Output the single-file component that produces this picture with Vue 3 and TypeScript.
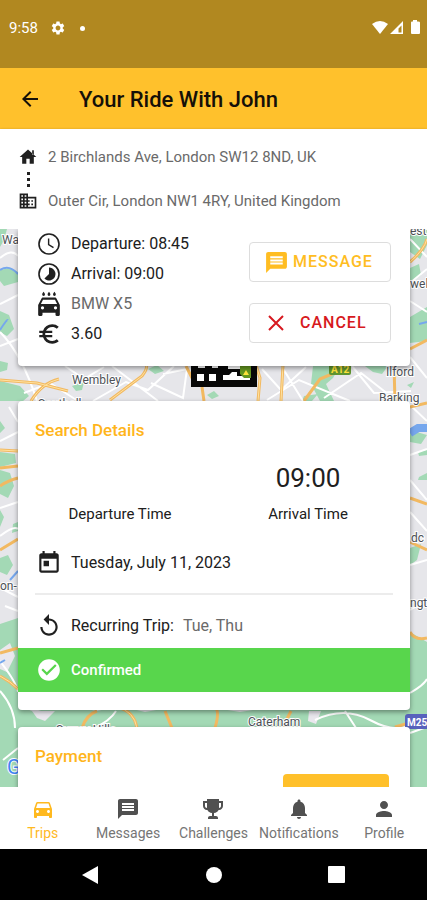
<script setup lang="ts">
interface Tab {
  label: string
  icon: string
}

const message = 'M20 2H4c-1.1 0-1.99.9-1.99 2L2 22l4-4h14c1.1 0 2-.9 2-2V4c0-1.1-.9-2-2-2zm-2 12H6v-2h12v2zm0-3H6V9h12v2zm0-3H6V6h12v2z'

const tabs: Tab[] = [
  {
    label: 'Trips',
    icon: 'M18.92 6.01C18.72 5.42 18.16 5 17.5 5h-11c-.66 0-1.21.42-1.42 1.01L3 12v8c0 .55.45 1 1 1h1c.55 0 1-.45 1-1v-1h12v1c0 .55.45 1 1 1h1c.55 0 1-.45 1-1v-8l-2.08-5.99zM6.5 16c-.83 0-1.5-.67-1.5-1.5S5.67 13 6.5 13s1.5.67 1.5 1.5S7.33 16 6.5 16zm11 0c-.83 0-1.5-.67-1.5-1.5s.67-1.5 1.5-1.5 1.5.67 1.5 1.5-.67 1.5-1.5 1.5zM5 11l1.5-4.5h11L19 11H5z',
  },
  { label: 'Messages', icon: message },
  {
    label: 'Challenges',
    icon: 'M18 2H6v2H2v5c0 2.2 1.8 4 4 4h.4c.8 1.7 2.5 2.9 4.6 3v3H9c-1.1 0-2 .9-2 2v1h10v-1c0-1.1-.9-2-2-2h-2v-3c2.100-.1 3.800-1.300 4.600-3h.4c2.200 0 4-1.800 4-4V4h-4V2zM4 6h2v5c-1.100 0-2-.9-2-2V6zm16 3c0 1.100-.9 2-2 2V6h2v3z',
  },
  {
    label: 'Notifications',
    icon: 'M12 22c1.1 0 2-.9 2-2h-4c0 1.1.89 2 2 2zm6-6v-5c0-3.07-1.64-5.64-4.5-6.32V4c0-.83-.67-1.500-1.500-1.500s-1.500.67-1.500 1.500v.68C7.630 5.360 6 7.920 6 11v5l-2 2v1h16v-1l-2-2z',
  },
  {
    label: 'Profile',
    icon: 'M12 12c2.210 0 4-1.790 4-4s-1.790-4-4-4-4 1.790-4 4 1.790 4 4 4zm0 2c-2.670 0-8 1.340-8 4v2h16v-2c0-2.660-5.330-4-8-4z',
  },
]
</script>

<template>
  <div class="screen">
    <div class="status">
      <span>9:58</span>
      <svg class="gear" viewBox="0 0 24 24"><path d="M19.140 12.940c.04-.3.06-.61.06-.94 0-.32-.02-.64-.07-.94l2.030-1.580c.18-.14.23-.41.12-.61l-1.920-3.320c-.12-.22-.37-.29-.59-.22l-2.390.96c-.5-.38-1.030-.7-1.620-.94l-.36-2.540c-.04-.24-.24-.41-.48-.41h-3.840c-.24 0-.43.17-.47.41l-.36 2.540c-.59.24-1.130.57-1.620.94l-2.390-.96c-.22-.08-.47 0-.59.22L2.740 8.870c-.12.21-.08.47.12.61l2.030 1.580c-.05.3-.09.63-.09.94s.02.64.07.94l-2.030 1.580c-.18.14-.23.41-.12.61l1.920 3.320c.12.22.37.29.59.22l2.390-.96c.5.38 1.030.7 1.620.94l.36 2.540c.05.24.24.41.48.41h3.840c.24 0 .44-.17.47-.41l.36-2.540c.59-.24 1.130-.56 1.620-.94l2.390.96c.22.08.47 0 .59-.22l1.920-3.320c.12-.22.07-.47-.12-.61l-2.010-1.580zM12 15.600c-1.980 0-3.600-1.620-3.600-3.600s1.620-3.600 3.600-3.600 3.600 1.620 3.600 3.600-1.620 3.600-3.600 3.600z" /></svg>
      <i class="dot"></i>
      <svg class="signals" viewBox="0 0 50 16">
        <path d="M0 4Q8-2 16 4L8 14Z" />
        <path d="M31 1V14H18ZM29.500 5.500 26.500 8.500V12.500H29.500Z" fill-rule="evenodd" />
        <path d="M39 2.500Q39 1.500 40 1.500H41V0H45V1.500H46Q48 1.500 48 2.500V13Q48 14 47 14H40Q39 14 39 13Z" />
      </svg>
    </div>

    <header class="bar">
      <button class="back" type="button" aria-label="Back">
        <svg viewBox="0 0 24 24"><path d="M20 11H7.830l5.590-5.590L12 4l-8 8 8 8 1.410-1.410L7.830 13H20v-2z" /></svg>
      </button>
      <h1>Your Ride With John</h1>
    </header>

    <section class="route">
      <div class="stop">
        <svg viewBox="0 0 24 24"><path d="M10 20v-6h4v6h5v-8h3L12 3 2 12h3v8zM17 4h2v5h-2z" /></svg>
        <span>2 Birchlands Ave, London SW12 8ND, UK</span>
      </div>
      <div class="link"><i></i><i></i><i></i></div>
      <div class="stop">
        <svg viewBox="0 0 24 24"><path d="M12 7V3H2v18h20V7H12zM6 19H4v-2h2v2zm0-4H4v-2h2v2zm0-4H4V9h2v2zm0-4H4V5h2v2zm4 12H8v-2h2v2zm0-4H8v-2h2v2zm0-4H8V9h2v2zm0-4H8V5h2v2zm10 12h-8v-2h2v-2h-2v-2h2v-2h-2V9h8v10zm-2-8h-2v2h2v-2zm0 4h-2v2h2v-2z" /></svg>
        <span>Outer Cir, London NW1 4RY, United Kingdom</span>
      </div>
    </section>

    <main class="content">
      <svg class="map" viewBox="0 229 427 558" preserveAspectRatio="xMidYMid slice" aria-hidden="true">
        <rect y="229" width="427" height="558" fill="#e6e6ea" />
        <g fill="#a3d9b5">
          <path d="M0 229H7L4 240 0 247ZM0 270 10 268 18 272V282L4 286 0 281ZM0 311 9 315 14 329 7 336 0 332ZM0 361 8 363 7 370 0 372ZM0 381 20 386 29 396 23 401H0ZM0 421 5 428 0 433ZM0 452 15 454 16 463 0 467ZM0 470 10 473 14 486 8 498 0 494ZM0 510 4 517 0 527ZM13 524 18 522V531L12 533ZM0 558 8 555 13 565 7 575 0 572ZM0 624 18 618V728H0Z" />
          <path d="M0 700 35 712 60 704 97 711 120 706 145 712 190 704 240 712 290 704 427 709V787H0Z" />
          <path d="M148 369 157 365 164 371 155 374ZM72 386 84 382 82 390 76 391ZM313 366H340L333 378 326 384 334 401H320L311 384ZM365 366 388 366 382 374 373 372ZM304 396 318 394 312 401H302ZM207 395 214 391 219 396 212 399ZM407 385 414 382 411 388Z" />
          <path d="M410 231 417 229 427 229V245L420 259 410 252ZM410 268 419 264 421 275 410 284ZM410 317 427 307V341L410 343ZM410 430 427 435 421 444 410 442ZM418 452 427 450V455L419 456ZM419 477 427 473V480H418ZM410 548 421 544 417 560 410 565ZM410 632 427 642V787H410Z" />
        </g>
        <g fill="#e9e7ed"><path d="M32 711 55 711 45 721 37 718ZM309 711H321L316 724 308 721ZM0 650 10 643 15 656 7 672 0 669Z" /></g>
        <g fill="none" stroke="#fff" stroke-width="2">
          <path d="M0 258Q12 248 18 256M0 304 18 295M0 332Q22 354 37 401M0 346 18 339M0 441 18 432M9 407 18 422M0 508 18 502M0 536Q14 525 18 529M0 588 18 597M5 606 18 611M0 661Q17 683 18 692M0 691Q15 708 15 728M3 760 18 748" />
          <path d="M65 366 84 379 104 367M24 393 50 383 78 401M93 401 126 382 148 390 174 366M112 366 158 401M163 374 187 369 183 398 151 383M262 369 281 390 306 367M267 400 299 380 350 401M282 367 303 401M324 398 361 373 393 398M352 366 374 393 411 391" />
          <path d="M410 239 427 257M410 283 427 269M410 301 427 312M410 357 427 378M410 405 427 421M410 455 427 449M410 480 427 500M410 512 427 531M410 565 427 560M410 610 427 600M410 693Q424 685 427 679M410 733 427 727M315 720Q344 706 370 720T410 724M345 711 356 728M116 711Q110 721 94 728" />
        </g>
        <g fill="none" stroke="#f2b961" stroke-width="3">
          <path d="M0 380 37 383 68 391M31 401Q42 383 59 379M110 400 142 376Q150 366 144 362M0 450 18 451M0 468 18 466M0 486Q9 480 18 478M0 550 18 539M0 653 18 648M0 676Q10 681 18 689M82 728Q86 715 97 711M117 707Q134 711 137 728M165 711 172 728M215 728Q220 711 215 707M283 727 291 711" />
          <path d="M186 366 192 378M202 387 204 401M256 365 260 378 258 401M283 365 281 401M304 401 320 379 332 374 340 366M394 366 395 401M410 262Q424 250 427 239M410 349 427 340M410 407 427 403M410 498 427 504M410 542 427 550M410 632Q415 641 427 638M395 727 409 723" />
        </g>
        <g fill="none" stroke="#ffe2a0">
          <path d="M0 380 37 383 68 391M31 401Q42 383 59 379M110 400 142 376Q150 366 144 362M0 450 18 451M0 676Q10 681 18 689M256 365 260 378 258 401M283 365 281 401M410 262Q424 250 427 239M117 707Q134 711 137 728" />
        </g>
        <g fill="none" stroke="#76a7ed" stroke-width="3">
          <path d="M0 270Q9 264 18 274M0 330Q7 319 8 320M10 580 18 571M0 663 5 660M419 324 427 322" stroke-width="2" />
          <path d="M410 433 418 428H427" stroke-width="8" />
        </g>
        <rect x="191" y="360" width="66" height="27" fill="#080808" />
        <path d="M197 374H204V381H197ZM209 374H216V381H209ZM223 375H229L232 372H237V376H250V380H223ZM198 366H205V368H198ZM212 366H218V368H212ZM228 366H240V369H228Z" fill="#fff" />
        <path d="M240 366H251V378H244L240 374Z" fill="#649620" />
        <path d="M246 370 249 375H243Z" fill="#ffe33b" />
        <rect x="329" y="360" width="22" height="15" rx="2" fill="#5f9430" />
        <rect x="405" y="714" width="34" height="15" rx="3" fill="#5862bd" />
        <g class="places">
          <text x="2" y="244">Wa</text>
          <text x="72" y="384">Wembley</text>
          <text x="386" y="376">Ilford</text>
          <text x="379" y="402">Barking</text>
          <text x="38" y="408">Southall</text>
          <text x="410" y="235">est</text>
          <text x="410" y="288">wel</text>
          <text x="411" y="542">dc</text>
          <text x="410" y="607">ngt</text>
          <text x="0" y="590">on-</text>
          <text x="56" y="734">Surrey Hills</text>
          <text x="248" y="726">Caterham</text>
        </g>
        <text x="331" y="373" class="shield">A12</text>
        <text x="407" y="726" class="shield motorway">M25</text>
        <text x="7" y="774" class="brand">G</text>
      </svg>

      <div class="cards">
        <section class="card ride">
          <ul class="facts">
            <li>
              <svg viewBox="0 0 24 24"><path d="M11.990 2C6.470 2 2 6.480 2 12s4.470 10 9.990 10C17.520 22 22 17.520 22 12S17.520 2 11.990 2zM12 20.500a8.500 8.500 0 1 1 0-17 8.500 8.500 0 0 1 0 17zM12.300 7H11v6l4.800 3 .7-1.200-4.200-2.500z" /></svg>
              <span>Departure: 08:45</span>
            </li>
            <li>
              <svg viewBox="0 0 24 24"><path d="M12 2a10 10 0 1 0 0 20 10 10 0 0 0 0-20zm0 18.500a8.500 8.500 0 1 1 0-17 8.500 8.500 0 0 1 0 17zM12 6v6l-4.240 4.240A6 6 0 1 0 12 6z" /></svg>
              <span>Arrival: 09:00</span>
            </li>
            <li class="muted">
              <svg viewBox="0 0 24 24"><path d="M18.920 7.010C18.720 6.420 18.160 6 17.500 6h-11c-.66 0-1.210.42-1.420 1.010L2 13v9c0 .55.45 1 1 1h2c.55 0 1-.45 1-1v-2h12v2c0 .55.45 1 1 1h2c.55 0 1-.45 1-1v-9l-3.080-5.990zM6 17a1.500 1.500 0 1 1 0-3 1.500 1.500 0 0 1 0 3zm12 0a1.500 1.500 0 1 1 0-3 1.500 1.500 0 0 1 0 3zM4.500 12 6.500 8h11l2 4zM7 4.500a1.300 1.300 0 0 0 1.300-1.300C8.300 2.300 7 .8 7 .8S5.700 2.300 5.700 3.200A1.300 1.300 0 0 0 7 4.500zm5 0a1.300 1.300 0 0 0 1.300-1.300C13.300 2.300 12 .8 12 .8s-1.300 1.500-1.300 2.400A1.300 1.300 0 0 0 12 4.500zm5 0a1.300 1.300 0 0 0 1.300-1.300c0-.9-1.300-2.400-1.300-2.400s-1.300 1.500-1.300 2.400A1.300 1.300 0 0 0 17 4.500z" /></svg>
              <span>BMW X5</span>
            </li>
            <li>
              <svg viewBox="0 0 24 24"><path d="M15 18.500A6.480 6.480 0 0 1 9.240 15H15v-2H8.580a6.600 6.600 0 0 1 0-2H15V9H9.240A6.490 6.490 0 0 1 15 5.500c1.610 0 3.090.59 4.230 1.570L21 5.300A8.960 8.960 0 0 0 15 3a9 9 0 0 0-8.480 6H3v2h3.060a8.300 8.300 0 0 0 0 2H3v2h3.520A9 9 0 0 0 15 21c2.310 0 4.410-.87 6-2.300l-1.780-1.770A6.400 6.400 0 0 1 15 18.500z" /></svg>
              <span>3.60</span>
            </li>
          </ul>
          <div class="actions">
            <button class="action message" type="button">
              <svg viewBox="0 0 24 24"><path :d="message" /></svg>
              <span>MESSAGE</span>
            </button>
            <button class="action cancel" type="button">
              <svg viewBox="0 0 24 24"><path d="M5 5 19 19M19 5 5 19" fill="none" stroke="currentColor" stroke-width="2" /></svg>
              <span>CANCEL</span>
            </button>
          </div>
        </section>

        <section class="card search">
          <h2>Search Details</h2>
          <div class="times">
            <div><strong></strong><span>Departure Time</span></div>
            <div><strong>09:00</strong><span>Arrival Time</span></div>
          </div>
          <div class="line date">
            <svg viewBox="0 0 24 24"><path d="M19 3h-1V1h-2v2H8V1H6v2H5c-1.110 0-1.990.9-1.990 2L3 19c0 1.100.89 2 2 2h14c1.100 0 2-.9 2-2V5c0-1.100-.9-2-2-2zm0 16H5V8h14v11zM7 10h5v5H7z" /></svg>
            <span>Tuesday, July 11, 2023</span>
          </div>
          <hr />
          <div class="line repeat">
            <svg viewBox="0 0 24 24"><path d="M12 5V1L7 6l5 5V7c3.310 0 6 2.690 6 6s-2.690 6-6 6-6-2.690-6-6H4c0 4.420 3.580 8 8 8s8-3.580 8-8-3.580-8-8-8z" /></svg>
            <span>Recurring Trip:</span>
            <span class="days">Tue, Thu</span>
          </div>
          <div class="line confirmed">
            <svg viewBox="0 0 24 24"><path d="M12 2C6.480 2 2 6.480 2 12s4.480 10 10 10 10-4.480 10-10S17.520 2 12 2zm-2 15-5-5 1.410-1.410L10 14.170l7.590-7.590L19 8l-9 9z" /></svg>
            <span>Confirmed</span>
          </div>
        </section>

        <section class="card payment">
          <h2>Payment</h2>
          <button class="pay" type="button" aria-label="Pay"></button>
        </section>
      </div>
    </main>

    <nav class="tabs">
      <a v-for="(tab, i) in tabs" :key="tab.label" href="#" :class="{ active: i === 0 }">
        <svg viewBox="0 0 24 24"><path :d="tab.icon" /></svg>
        <span>{{ tab.label }}</span>
      </a>
    </nav>

    <div class="system">
      <button type="button" aria-label="System back"><svg viewBox="0 0 20 20"><path d="M17 1V19L1 10Z" /></svg></button>
      <button type="button" aria-label="Home"><svg viewBox="0 0 20 20"><circle cx="10" cy="10" r="8" /></svg></button>
      <button type="button" aria-label="Overview"><svg viewBox="0 0 20 20"><rect x="1" y="1" width="17" height="17" rx="1" /></svg></button>
    </div>
  </div>
</template>

<style>
body {
  background: #fff;
}
</style>

<style scoped>
.screen {
  display: flex;
  flex-direction: column;
  height: 100vh;
  overflow: hidden;
  font-family: Roboto, "Liberation Sans", sans-serif;
  font-size: 15px;
  line-height: 20px;
  color: #202020;
}
svg {
  display: block;
  flex: none;
  fill: currentColor;
}
button {
  font: inherit;
  cursor: pointer;
}
h1,
h2,
ul {
  margin: 0;
  padding: 0;
}
.status {
  display: flex;
  align-items: center;
  flex: none;
  height: 68px;
  box-sizing: border-box;
  padding: 0 5px 12px 9px;
  color: #fff;
  background: #b18820;
}
.gear {
  width: 16px;
  margin: 0 14px 0 12px;
}
.dot {
  width: 5px;
  height: 5px;
  border-radius: 50%;
  background: #fff;
}
.signals {
  width: 50px;
  margin-left: auto;
}
.bar {
  display: flex;
  align-items: center;
  flex: none;
  height: 61px;
  padding: 0 18px;
  box-sizing: border-box;
  background: #ffc12c;
  color: #151008;
}
.back {
  padding: 0;
  border: 0;
  background: none;
  color: inherit;
}
.back svg {
  width: 24px;
}
h1 {
  margin-left: 37px;
  padding-top: 2px;
  font-size: 22px;
  line-height: 28px;
  font-weight: 500;
}
.route {
  position: relative;
  flex: none;
  padding: 18px;
  background: #fff;
  box-shadow: 0 1px 3px #0005;
}
.stop {
  display: flex;
  align-items: center;
  gap: 10px;
  color: #6a6a6a;
}
.stop svg {
  width: 20px;
  color: #202020;
}
.link {
  display: flex;
  flex-direction: column;
  align-items: center;
  justify-content: center;
  gap: 3px;
  width: 20px;
  height: 24px;
}
.link i {
  width: 3px;
  height: 3px;
  background: #222;
}
.content {
  position: relative;
  flex: 1;
  min-height: 0;
  overflow: hidden;
}
.map {
  position: absolute;
  inset: 0;
  width: 100%;
  height: 100%;
}
.places {
  font-size: 12px;
  fill: #4d5156;
  stroke: #fff;
  stroke-width: 2px;
  paint-order: stroke;
}
.shield {
  font-size: 10px;
  font-weight: 700;
  fill: #ffe33b;
}
.motorway {
  fill: #fff;
}
.brand {
  font-size: 20px;
  fill: #4285f4;
  stroke: #fff;
  stroke-width: 2px;
  paint-order: stroke;
}
.cards {
  position: relative;
  display: flex;
  flex-direction: column;
  height: 100%;
  box-sizing: border-box;
  padding: 0 17px 0 18px;
}
.card {
  flex: none;
  background: #fff;
  border-radius: 4px;
  box-shadow: 0 2px 5px #0006;
}
.ride {
  display: flex;
  justify-content: space-between;
  padding: 0 19px 17px 18px;
  margin-bottom: 35px;
  border-radius: 0 0 4px 4px;
}
.facts {
  list-style: none;
}
.facts li,
.line {
  display: flex;
  align-items: center;
  gap: 9px;
  font-size: 16px;
}
.facts li {
  height: 30px;
}
.facts svg,
.line svg {
  width: 26px;
}
.muted span,
.days {
  color: #6a6a6a;
}
.actions {
  display: flex;
  flex-direction: column;
  gap: 21px;
  padding-top: 13px;
}
.action {
  display: flex;
  align-items: center;
  width: 142px;
  height: 40px;
  padding: 0 14px;
  border: 1px solid #ddd;
  border-radius: 4px;
  background: #fff;
  font-size: 16px;
  font-weight: 500;
  letter-spacing: 1px;
}
.message {
  gap: 4px;
  color: #ffbd22;
}
.message svg {
  width: 25px;
}
.cancel {
  gap: 12px;
  color: #d71920;
}
.cancel svg {
  width: 24px;
}
.search {
  padding: 19px 0 18px;
  margin-bottom: 17px;
}
h2 {
  padding: 0 17px;
  font-size: 17px;
  line-height: 20px;
  font-weight: 500;
  color: #ffb51c;
}
.times {
  display: grid;
  grid-template-columns: 1fr 1fr;
  padding: 22px 8px 0;
  text-align: center;
}
.times strong {
  display: block;
  height: 32px;
  margin-bottom: 10px;
  font-size: 26px;
  line-height: 32px;
  font-weight: 400;
}
.times span {
  display: block;
}
.line {
  padding: 0 18px;
}
.date {
  padding-top: 26px;
}
hr {
  height: 2px;
  margin: 17px 17px 18px;
  border: 0;
  background: #ececec;
}
.repeat {
  height: 26px;
}
.confirmed {
  height: 44px;
  margin-top: 9px;
  color: #fff;
  background: #58d64c;
  font-size: 15px;
  font-weight: 500;
}
.payment {
  display: flex;
  flex-direction: column;
  gap: 8px;
  padding: 19px 0 18px;
}
.pay {
  align-self: flex-end;
  width: 106px;
  height: 40px;
  margin-right: 21px;
  border: 0;
  border-radius: 4px;
  background: #ffc02a;
}
.tabs {
  position: relative;
  display: grid;
  grid-template-columns: repeat(5, 1fr);
  flex: none;
  height: 62px;
  background: #fff;
}
.tabs a {
  display: flex;
  flex-direction: column;
  align-items: center;
  gap: 4px;
  padding-top: 10px;
  color: #757575;
  font-size: 14px;
  line-height: 16px;
  text-decoration: none;
}
.tabs svg {
  width: 24px;
  color: #505050;
}
.tabs .active,
.tabs .active svg {
  color: #ffb91f;
}
.system {
  display: flex;
  align-items: center;
  justify-content: center;
  gap: 103px;
  flex: none;
  height: 51px;
  background: #000;
}
.system button {
  padding: 0;
  border: 0;
  background: none;
  color: #fff;
}
.system svg {
  width: 20px;
}
</style>
